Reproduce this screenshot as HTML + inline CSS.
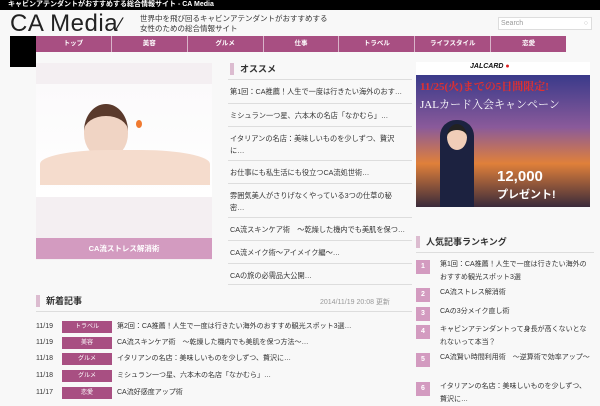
<!DOCTYPE html><html><head><meta charset="utf-8"><style>
*{margin:0;padding:0;box-sizing:border-box}
body{width:600px;height:400px;overflow:hidden;background:#f8f8f8;font-family:"Liberation Sans","Noto Sans CJK JP",sans-serif;color:#444;position:relative}
.a{position:absolute}
.top{left:0;top:0;width:600px;height:10px;background:#000;color:#fff;font-size:7px;line-height:10px;padding-left:8px;font-weight:bold}
.nav{left:36px;top:36px;width:530px;height:16px;background:#a84f82;display:flex}
.nav div{flex:1;color:#fff;font-size:6.5px;text-align:center;line-height:16px;border-right:1px solid #d9b4c9;font-weight:bold}
.nav div:last-child{border:none}
.mid div.i{position:absolute;left:228px;width:184px;font-size:7.2px;line-height:12px;color:#333;border-top:1px solid #ddd;padding:6px 2px 0}
.hd{font-size:9px;font-weight:bold;color:#333;border-left:4px solid #dcbcd0;padding-left:6px;line-height:12px}
.row{left:36px;width:380px;height:14px;font-size:7px;line-height:14px;color:#333}
.row span.d{position:absolute;left:0}
.row span.t{position:absolute;left:26px;width:50px;height:12px;top:1px;background:#a84f82;color:#fff;text-align:center;font-size:6px;line-height:12px}
.row span.x{position:absolute;left:81px}
.rk{left:416px;width:180px;font-size:7px;line-height:13px;color:#333}
.rk b{position:absolute;left:0;top:2px;width:14px;height:14px;background:#d39bc0;color:#fff;font-size:7px;text-align:center;line-height:14px}
.rk span{position:absolute;left:24px;width:150px}
</style></head><body>
<div class="a top">キャビンアテンダントがおすすめする総合情報サイト - CA Media</div>
<div class="a" style="left:10px;top:10px;font-size:24px;color:#222;letter-spacing:0.5px">CA Media<span style="font-size:19px">⁄</span></div>
<div class="a" style="left:140px;top:14px;font-size:7.5px;line-height:10px;color:#333">世界中を飛び回るキャビンアテンダントがおすすめする<br>女性のための総合情報サイト</div>
<div class="a" style="left:498px;top:17px;width:94px;height:13px;background:#fff;border:1px solid #ddd;font-size:7px;color:#999;line-height:11px;padding-left:2px">Search<span style="position:absolute;right:3px;color:#bbb">○</span></div>
<div class="a" style="left:10px;top:36px;width:26px;height:31px;background:#000"></div>
<div class="a nav"><div>トップ</div><div>美容</div><div>グルメ</div><div>仕事</div><div>トラベル</div><div>ライフスタイル</div><div>恋愛</div></div>
<div class="a" style="left:36px;top:63px;width:176px;height:197px;background:#f4eff2"></div>
<div class="a" style="left:36px;top:84px;width:176px;height:113px;background:linear-gradient(180deg,#fbfafb 0%,#fff 100%)"></div>
<div class="a" style="left:84px;top:104px;width:44px;height:54px;border-radius:50% 50% 45% 45%;background:#f0d4c4;border-top:12px solid #5a3a2c"></div>
<div class="a" style="left:136px;top:120px;width:6px;height:8px;background:#f07a30;border-radius:50%"></div>
<div class="a" style="left:40px;top:150px;width:170px;height:35px;border-radius:40% 40% 0 0;background:#f5dccd"></div>
<div class="a" style="left:36px;top:238px;width:176px;height:21px;background:#d39bc0;color:#fff;font-size:7.5px;font-weight:bold;text-align:center;line-height:21px">CA流ストレス解消術</div>
<div class="a hd" style="left:230px;top:63px">オススメ</div>
<div class="mid">
<div class="i" style="top:79px;height:24px">第1回：CA推薦！人生で一度は行きたい海外のおす…</div>
<div class="i" style="top:103px;height:23px">ミシュラン一つ星、六本木の名店「なかむら」…</div>
<div class="i" style="top:126px;height:34px">イタリアンの名店：美味しいものを少しずつ、贅沢<br>に…</div>
<div class="i" style="top:160px;height:23px">お仕事にも私生活にも役立つCA流処世術…</div>
<div class="i" style="top:183px;height:34px">雰囲気美人がさりげなくやっている3つの仕草の秘<br>密…</div>
<div class="i" style="top:217px;height:23px">CA流スキンケア術　〜乾燥した機内でも美肌を保つ…</div>
<div class="i" style="top:240px;height:23px">CA流メイク術〜アイメイク編〜…</div>
<div class="i" style="top:263px;height:22px;border-bottom:1px solid #ddd">CAの旅の必需品大公開…</div>
</div>
<div class="a" style="left:416px;top:62px;width:174px;height:145px;background:linear-gradient(180deg,#fff 0,#fff 13px,#3a3a8a 13px,#8a5a9a 45%,#e0803a 70%,#3a2a3a 100%)"></div>
<div class="a" style="left:470px;top:63px;font-size:7px;font-weight:bold;font-style:italic;color:#111">JALCARD <span style="color:#d22">●</span></div>
<div class="a" style="left:420px;top:78px;font-size:11px;font-weight:bold;color:#e03030;font-family:'Liberation Serif','Noto Serif CJK SC',serif">11/25(火)までの5日間限定!</div>
<div class="a" style="left:420px;top:96px;font-size:11px;color:#fff;font-family:'Liberation Serif','Noto Serif CJK SC',serif">JALカード入会キャンペーン</div>
<div class="a" style="left:440px;top:120px;width:34px;height:87px;background:#1c2240;border-radius:16px 16px 0 0"></div>
<div class="a" style="left:447px;top:124px;width:20px;height:26px;background:#f0cdb8;border-radius:50%;border-top:6px solid #222"></div>
<div class="a" style="left:497px;top:168px;font-size:15px;font-weight:bold;color:#fff">12,000</div>
<div class="a" style="left:497px;top:186px;font-size:11px;font-weight:bold;color:#fff">プレゼント!</div>
<div class="a hd" style="left:416px;top:236px">人気記事ランキング</div>
<div class="a" style="left:416px;top:252px;width:178px;border-top:1px solid #ddd"></div>
<div class="a rk" style="top:258px"><b>1</b><span>第1回：CA推薦！人生で一度は行きたい海外のおすすめ観光スポット3選</span></div>
<div class="a rk" style="top:286px"><b>2</b><span>CA流ストレス解消術</span></div>
<div class="a rk" style="top:305px"><b>3</b><span>CAの3分メイク直し術</span></div>
<div class="a rk" style="top:323px"><b>4</b><span>キャビンアテンダントって身長が高くないとなれないって本当？</span></div>
<div class="a rk" style="top:351px"><b>5</b><span>CA流賢い時間利用術　〜逆算術で効率アップ〜</span></div>
<div class="a rk" style="top:380px"><b>6</b><span>イタリアンの名店：美味しいものを少しずつ、贅沢に…</span></div>
<div class="a hd" style="left:36px;top:295px">新着記事</div>
<div class="a" style="left:320px;top:297px;font-size:7px;color:#999">2014/11/19 20:08 更新</div>
<div class="a" style="left:36px;top:311px;width:376px;border-top:1px solid #ddd"></div>
<div class="a row" style="top:320px"><span class="d">11/19</span><span class="t">トラベル</span><span class="x">第2回：CA推薦！人生で一度は行きたい海外のおすすめ観光スポット3選…</span></div>
<div class="a row" style="top:336px"><span class="d">11/19</span><span class="t">美容</span><span class="x">CA流スキンケア術　〜乾燥した機内でも美肌を保つ方法〜…</span></div>
<div class="a row" style="top:352px"><span class="d">11/18</span><span class="t">グルメ</span><span class="x">イタリアンの名店：美味しいものを少しずつ、贅沢に…</span></div>
<div class="a row" style="top:369px"><span class="d">11/18</span><span class="t">グルメ</span><span class="x">ミシュラン一つ星、六本木の名店「なかむら」…</span></div>
<div class="a row" style="top:386px"><span class="d">11/17</span><span class="t">恋愛</span><span class="x">CA流好感度アップ術</span></div>
</body></html>
